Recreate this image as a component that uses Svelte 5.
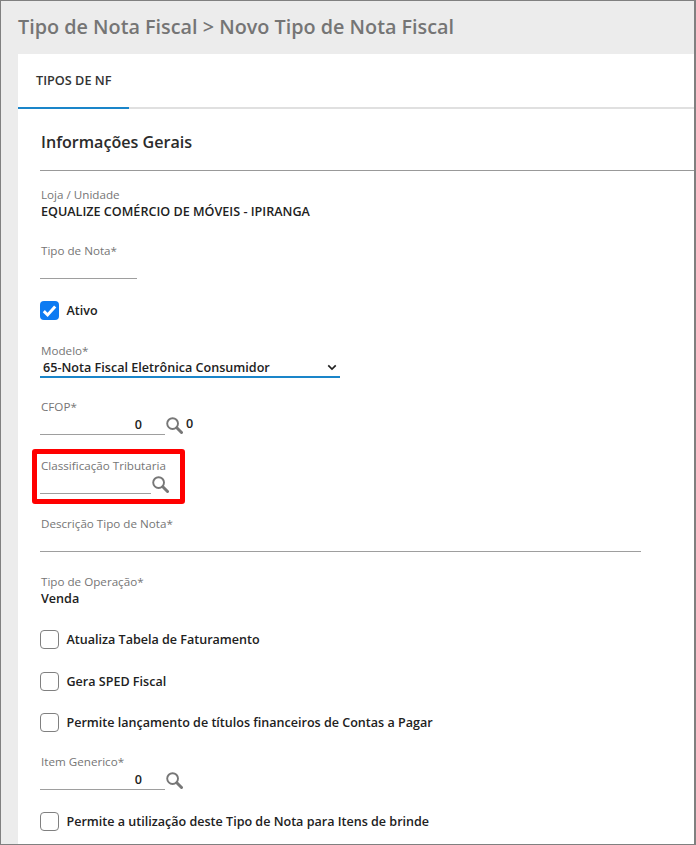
<script lang="ts">
	const checks = [
		{ label: 'Atualiza Tabela de Faturamento', gap: 'a' },
		{ label: 'Gera SPED Fiscal', gap: 'b' },
		{ label: 'Permite lançamento de títulos financeiros de Contas a Pagar', gap: 'c' }
	];
</script>

{#snippet lens()}
	<svg class="lens" viewBox="0 0 17 17" aria-hidden="true">
		<circle cx="6.6" cy="6.6" r="5.4" />
		<line x1="10.8" y1="10.8" x2="15.5" y2="15.5" />
	</svg>
{/snippet}

{#snippet box(on = false)}
	<span class="box" class:on>
		{#if on}
			<svg viewBox="0 0 18 18" aria-hidden="true"><path d="M3.6 9.6 7.2 13.2 14.4 5.2" /></svg>
		{/if}
	</span>
{/snippet}

<div class="page">
	<h1>Tipo de Nota Fiscal &gt; Novo Tipo de Nota Fiscal</h1>

	<main class="card">
		<nav class="tabs"><span class="tab">TIPOS DE NF</span></nav>

		<section class="body">
			<h2>Informações Gerais</h2>

			<div class="field loja">
				<span class="label">Loja / Unidade</span>
				<span class="value">EQUALIZE COMÉRCIO DE MÓVEIS - IPIRANGA</span>
			</div>

			<div class="field tipo">
				<span class="label">Tipo de Nota*</span>
				<div class="input w97"></div>
			</div>

			<div class="check ativo">{@render box(true)}<span>Ativo</span></div>

			<div class="field modelo">
				<span class="label">Modelo*</span>
				<div class="select">
					<span>65-Nota Fiscal Eletrônica Consumidor</span>
					<svg viewBox="0 0 12 8" aria-hidden="true"><path d="M1.5 1.5 6 6l4.5-4.5" /></svg>
				</div>
			</div>

			<div class="field cfop">
				<span class="label">CFOP*</span>
				<div class="row">
					<div class="input w125 num">0</div>
					{@render lens()}
					<span class="after">0</span>
				</div>
			</div>

			<div class="field classif">
				<span class="label">Classificação Tributaria</span>
				<div class="row">
					<div class="input w111"></div>
					{@render lens()}
				</div>
				<div class="highlight"></div>
			</div>

			<div class="field descr">
				<span class="label">Descrição Tipo de Nota*</span>
				<div class="input w601"></div>
			</div>

			<div class="field oper">
				<span class="label">Tipo de Operação*</span>
				<span class="value">Venda</span>
			</div>

			{#each checks as c}
				<div class="check {c.gap}">{@render box()}<span>{c.label}</span></div>
			{/each}

			<div class="field item">
				<span class="label">Item Generico*</span>
				<div class="row">
					<div class="input w125 num">0</div>
					{@render lens()}
				</div>
			</div>

			<div class="check brinde">{@render box()}<span>Permite a utilização deste Tipo de Nota para Itens de brinde</span></div>
		</section>
	</main>
</div>

<style>
	:global(body) {
		margin: 0;
	}

	.page {
		box-sizing: border-box;
		width: 696px;
		height: 845px;
		overflow: hidden;
		background: #ececec;
		border: 1px solid #808080;
		border-width: 1px 2px 1px 1px;
		font-family: 'Open Sans', 'Liberation Sans', sans-serif;
		color: #212121;
	}

	h1 {
		margin: 0;
		height: 53px;
		padding-left: 17px;
		font-size: 19.8px;
		line-height: 52px;
		font-weight: 600;
		color: #757575;
	}

	.card {
		margin-left: 17px;
		height: 790px;
		background: #fff;
	}

	.tabs {
		height: 55px;
		box-sizing: border-box;
		border-bottom: 2px solid #e0e0e0;
	}
	.tab {
		display: block;
		box-sizing: border-box;
		width: 111px;
		height: 55px;
		padding-left: 18px;
		border-bottom: 2px solid #1a85c9;
		font-size: 12.7px;
		font-weight: 600;
		line-height: 53px;
		color: #333;
	}

	.body {
		padding-left: 22px;
	}

	h2 {
		margin: 0;
		height: 62px;
		padding-left: 1px;
		box-sizing: border-box;
		border-bottom: 1px solid #999;
		font-size: 16.1px;
		font-weight: 600;
		line-height: 66px;
		color: #2b2b2b;
	}

	.field {
		position: relative;
		display: flex;
		flex-direction: column;
	}

	.label {
		padding-left: 1px;
		font-size: 11.65px;
		line-height: 17px;
		color: #757575;
	}

	.value {
		padding-left: 1px;
		font-size: 12.6px;
		line-height: 17px;
		font-weight: 600;
		color: #212121;
	}

	.input {
		box-sizing: border-box;
		height: 20px;
		border-bottom: 1px solid #9e9e9e;
		font-size: 12.6px;
		font-weight: 600;
		line-height: 20px;
	}
	.w97 { width: 97px; }
	.w111 { width: 111px; }
	.w125 { width: 125px; }
	.w601 { width: 601px; }
	.num {
		padding-right: 23px;
		text-align: right;
	}

	.row {
		display: flex;
		align-items: flex-start;
	}

	.lens {
		width: 17px;
		height: 17px;
		margin: 2px 0 0 1px;
		fill: none;
		stroke: #777;
		stroke-width: 1.9;
		flex: none;
	}
	.lens line {
		stroke-width: 3;
		stroke-linecap: round;
	}

	.after {
		margin-left: 3px;
		font-size: 12.6px;
		font-weight: 600;
		line-height: 17px;
	}

	.check {
		display: flex;
		align-items: center;
		gap: 7.5px;
		font-size: 12.55px;
		font-weight: 600;
		line-height: 19px;
		color: #212121;
	}

	.box {
		box-sizing: border-box;
		width: 19px;
		height: 19px;
		border: 1.5px solid #808080;
		border-radius: 4px;
		background: #fff;
		flex: none;
	}
	.box.on {
		border: none;
		background: #0d7bf2;
	}
	.box svg {
		display: block;
		width: 19px;
		height: 19px;
		fill: none;
		stroke: #fff;
		stroke-width: 2.8;
	}

	.select {
		box-sizing: border-box;
		display: flex;
		align-items: center;
		justify-content: space-between;
		width: 300px;
		height: 19px;
		padding: 0 3px 0 3px;
		border-bottom: 2px solid #1a85c9;
		font-size: 12.6px;
		font-weight: 600;
		line-height: 17px;
	}
	.select svg {
		width: 10px;
		height: 7px;
		fill: none;
		stroke: #212121;
		stroke-width: 2;
	}

	.highlight {
		position: absolute;
		left: -8px;
		top: -8px;
		width: 153px;
		height: 55px;
		box-sizing: border-box;
		border: 5px solid #f00;
		border-radius: 3px;
	}

	.loja { margin-top: 15px; }
	.tipo { margin-top: 22px; }
	.ativo { margin-top: 22px; }
	.modelo { margin-top: 22px; }
	.cfop { margin-top: 20px; }
	.classif { margin-top: 22px; }
	.descr { margin-top: 21px; }
	.oper { margin-top: 21px; }
	.a { margin-top: 23px; }
	.b { margin-top: 23px; }
	.c { margin-top: 22px; }
	.item { margin-top: 21px; }
	.brinde { margin-top: 22px; }
</style>
